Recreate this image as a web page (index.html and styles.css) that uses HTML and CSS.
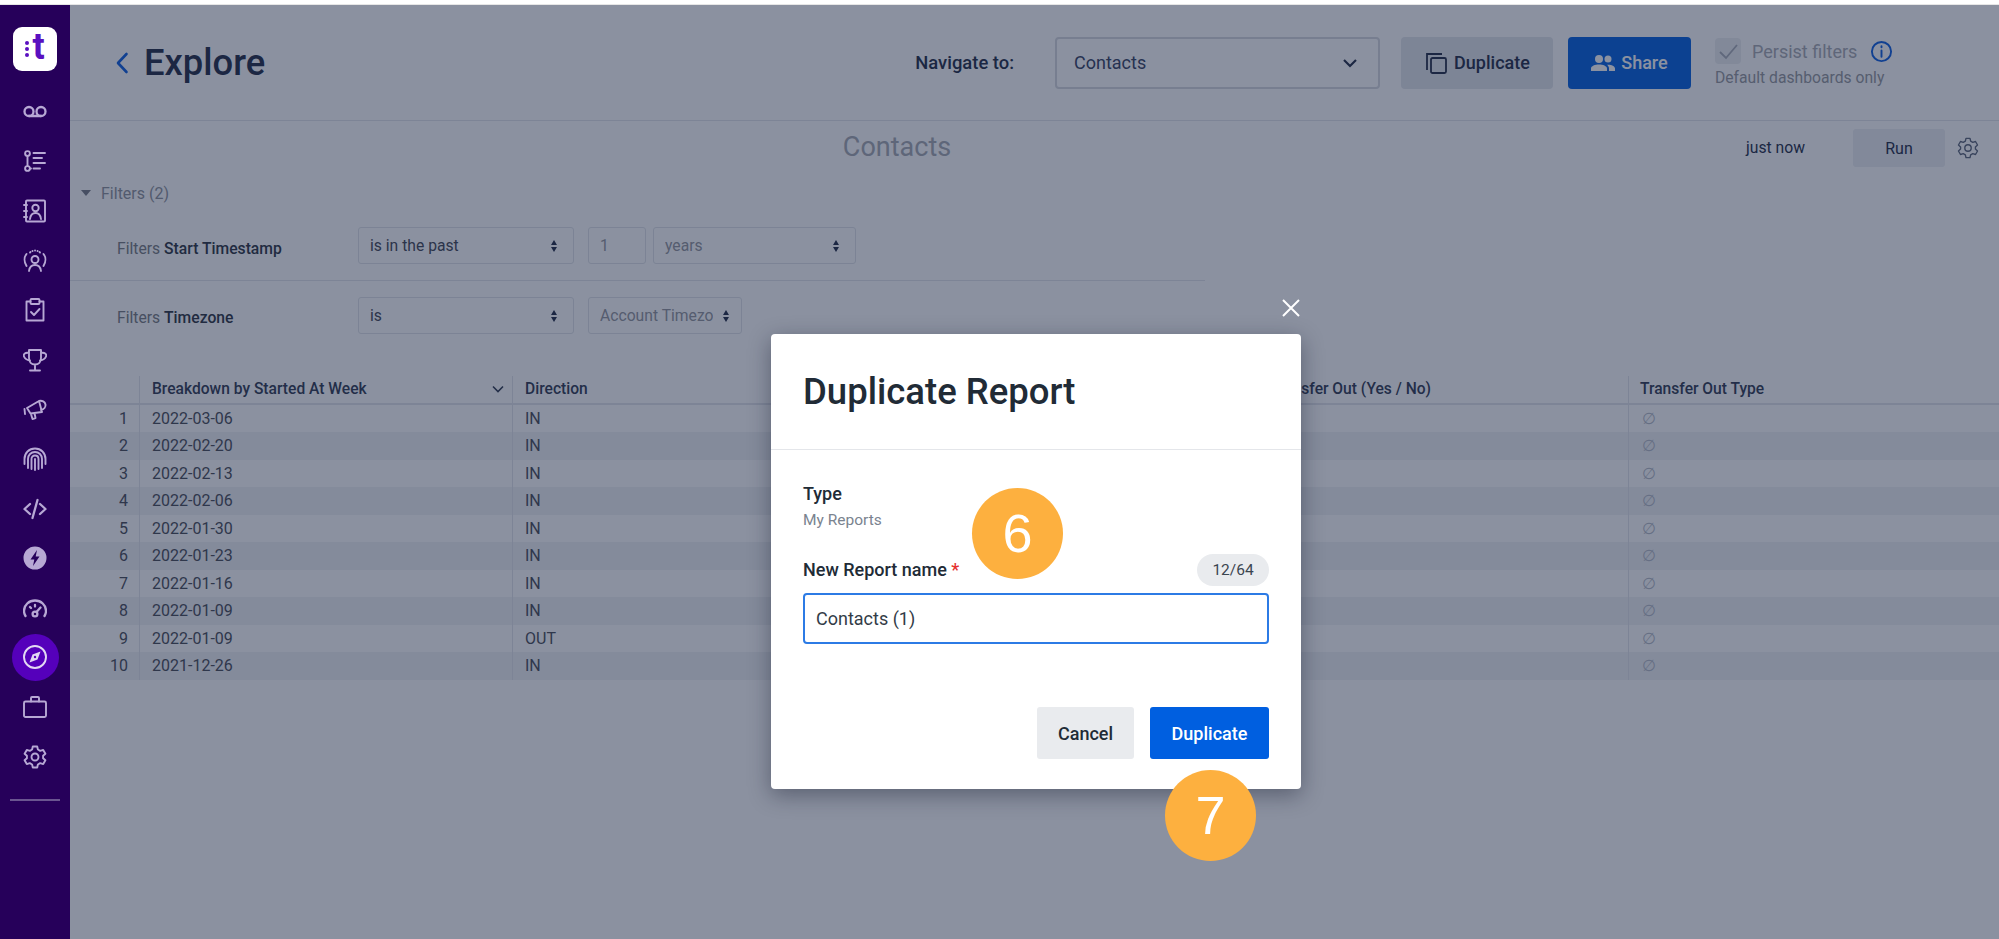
FILE: index.html
```html
<!DOCTYPE html>
<html lang="en">
<head>
<meta charset="utf-8">
<title>Explore</title>
<link rel="stylesheet" href="styles.css">
</head>
<body>
<div class="topstrip"></div>
<div class="app">
  <aside class="sidebar">
    <div class="logo"><span class="logo-dots"><i></i><i></i><i></i></span><span class="logo-t">t</span></div>
    <nav class="nav">
      <a class="nav-item"><svg viewBox="0 0 24 24" class="ic ic-bold"><circle cx="6" cy="11.500" r="4.500"/><circle cx="18" cy="11.500" r="4.500"/><path d="M6 16h12"/></svg></a>
      <a class="nav-item"><svg viewBox="0 0 24 24" class="ic"><circle cx="4.500" cy="4.500" r="2.400"/><circle cx="4.500" cy="19.500" r="2.400"/><path d="M4.500 7v10M7 19.500h1M10.500 4H22M10.500 9H19M10.500 14H22M10.500 19.500H17"/></svg></a>
      <a class="nav-item"><svg viewBox="0 0 24 24" class="ic"><rect x="3" y="1.500" width="19" height="21" rx="1"/><circle cx="12.500" cy="9" r="3.200"/><path d="M7 20c.5-4 2.500-6 5.500-6s5 2 5.500 6M1 6h3M1 12h3M1 18h3"/></svg></a>
      <a class="nav-item"><svg viewBox="0 0 24 24" class="ic"><circle cx="12" cy="10.500" r="3.500"/><path d="M6 22c.5-4 2.500-6 6-6s5.500 2 6 6M3.500 17C1 13 1 8 3.500 5M20.500 17c2.500-4 2.500-9 0-12"/><path class="dots" d="M7 3.500 7.500 3M12 1.500h.1M17 3.500 16.500 3M9.500 2h.1M14.500 2h.1"/></svg></a>
      <a class="nav-item"><svg viewBox="0 0 24 24" class="ic"><path d="M7.500 3.500H3.500v19h17v-19h-4"/><rect x="7.500" y="1" width="9" height="5" rx="1"/><path d="m8 14 3 3 5.500-6"/></svg></a>
      <a class="nav-item"><svg viewBox="0 0 24 24" class="ic"><path d="M6 2h12v8c0 4-2.500 6.500-6 6.500S6 14 6 10zM12 16.500V22M7 22.500h10M6 5C2.500 4 0 6 1 8.500S4 12 7 12.500M18 5c3.500-1 6 1 5 3.500S20 12 17 12.500"/></svg></a>
      <a class="nav-item"><svg viewBox="0 0 24 24" class="ic"><path d="m4 11 12-7 3 11-11.500 1.500zM16 4c3-1 6 1 6.500 3.500S21 12.500 18 13M1.500 12l.5 5M8 17l1.500 5 3-1-1-5"/></svg></a>
      <a class="nav-item"><svg viewBox="0 0 24 24" class="ic"><path d="M1.500 17v-5C1.500 6 6 1.500 12 1.500S22.500 6 22.500 12v5M5 21v-9c0-4 3-7 7-7s7 3 7 7v9M8.500 22v-10c0-2 1.500-3.500 3.500-3.500s3.500 1.500 3.500 3.500v10M12 12v11"/></svg></a>
      <a class="nav-item"><svg viewBox="0 0 24 24" class="ic ic-bold"><path d="M7 7 1.500 12 7 17M17 7l5.500 5-5.500 5M14.500 3 9.500 21"/></svg></a>
      <a class="nav-item"><svg viewBox="0 0 24 24" class="ic-fill"><path d="M12 .5a11.500 11.500 0 1 0 0 23 11.500 11.500 0 0 0 0-23zm-2 19.500 1.300-6.500H7.500L14 4l-1.300 6.500h3.800z"/></svg></a>
      <a class="nav-item"><svg viewBox="0 0 24 24" class="ic ic-bold"><path d="M2.500 20C1.500 18.500 1 16.500 1 15 1 9 6 4.500 12 4.500S23 9 23 15c0 1.500-.5 3.500-1.500 5M7 11l1 1M12 9v1.500M17.500 11.500 13.500 16"/><circle cx="12" cy="18" r="2.400"/></svg></a>
      <a class="nav-item is-active"><svg viewBox="0 0 24 24" class="ic ic-white"><circle cx="12" cy="12" r="11"/><path class="needle" d="M17.500 6.500 14.500 14.500 6.500 17.500 9.500 9.500z"/><circle class="hub" cx="12" cy="12" r="1.200"/></svg></a>
      <a class="nav-item"><svg viewBox="0 0 24 24" class="ic"><rect x="1" y="6.500" width="22" height="15.500" rx="1.500"/><path d="M8 6.500V3a1 1 0 0 1 1-1h6a1 1 0 0 1 1 1v3.500"/></svg></a>
      <a class="nav-item"><svg viewBox="0 0 24 24" class="ic"><circle cx="12" cy="12" r="3.500"/><path d="M9.800 1.500h4.400l.7 3 2.300 1.300 3-.9 2.200 3.800-2.300 2.100v2.400l2.300 2.100-2.200 3.800-3-.9-2.300 1.300-.7 3H9.800l-.7-3-2.300-1.300-3 .9-2.200-3.800 2.300-2.100v-2.400L1.600 8.700l2.200-3.800 3 .9 2.300-1.300z"/></svg></a>
    </nav>
    <div class="nav-rule"></div>
  </aside>

  <main class="main">
    <header class="page-head">
      <svg viewBox="0 0 14 22" class="back"><path d="M11.500 2 3 11l8.500 9"/></svg>
      <h1 class="page-title">Explore</h1>
      <span class="nav-label">Navigate to:</span>
      <div class="nav-select"><span>Contacts</span><svg viewBox="0 0 16 10" class="chev"><path d="m2 2 6 6 6-6"/></svg></div>
      <button class="btn btn-grey"><svg viewBox="0 0 24 24" class="btn-ic"><path d="M3 19V3h15"/><rect x="7" y="7" width="15" height="15" rx="1.500"/></svg>Duplicate</button>
      <button class="btn btn-blue"><svg viewBox="0 0 24 24" class="btn-ic-fill"><circle cx="8" cy="8" r="4"/><circle cx="17" cy="8" r="3.500"/><path d="M0 20v-2.500C0 15 4 13.500 8 13.500s8 1.500 8 4V20zM18 20v-2.500c0-1.500-.8-2.800-2-3.700 3.500-.4 8 1 8 3.700V20z"/></svg>Share</button>
      <div class="persist">
        <div class="persist-top">
          <span class="check"><svg viewBox="0 0 26 26"><path d="m5 14 6 6 11-13"/></svg></span>
          <span class="persist-label">Persist filters</span>
          <svg viewBox="0 0 24 24" class="info"><circle cx="12" cy="12" r="10"/><path d="M12 11v6.500M12 6.500v1"/></svg>
        </div>
        <div class="persist-note">Default dashboards only</div>
      </div>
    </header>

    <section class="report-bar">
      <h2 class="report-title">Contacts</h2>
      <div class="report-actions">
        <span class="stamp">just now</span>
        <button class="btn-run">Run</button>
        <svg viewBox="0 0 24 24" class="run-gear"><circle cx="12" cy="12" r="3.500"/><path d="M9.800 1.500h4.400l.7 3 2.300 1.300 3-.9 2.200 3.800-2.300 2.100v2.400l2.300 2.100-2.200 3.800-3-.9-2.300 1.300-.7 3H9.800l-.7-3-2.300-1.300-3 .9-2.200-3.800 2.300-2.100v-2.400L1.600 8.700l2.200-3.800 3 .9 2.300-1.300z"/></svg>
      </div>
    </section>

    <div class="filters-head"><span class="tri"></span>Filters (2)</div>
    <div class="filter-row first">
      <span class="filter-label">Filters <b>Start Timestamp</b></span>
      <div class="fsel w-op"><span class="fsel-text">is in the past</span><span class="updown"></span></div>
      <div class="fsel w-num"><span class="fsel-text muted">1</span></div>
      <div class="fsel w-unit"><span class="fsel-text muted">years</span><span class="updown"></span></div>
    </div>
    <div class="filter-row second">
      <span class="filter-label">Filters <b>Timezone</b></span>
      <div class="fsel w-op"><span class="fsel-text">is</span><span class="updown"></span></div>
      <div class="fsel w-tz"><span class="fsel-text muted">Account Timezone</span><span class="updown"></span></div>
    </div>

    <div class="table">
      <div class="tr th">
        <div class="td c-num"></div>
        <div class="td c-a">Breakdown by Started At Week<svg viewBox="0 0 12 8" class="th-chev"><path d="m1 1.500 5 5 5-5"/></svg></div>
        <div class="td c-b">Direction</div>
        <div class="td c-c">Transfer Out (Yes / No)</div>
        <div class="td c-d">Transfer Out Type</div>
      </div>
      <div class="tr"><div class="td c-num">1</div><div class="td c-a">2022-03-06</div><div class="td c-b">IN</div><div class="td c-c"></div><div class="td c-d null">∅</div></div>
      <div class="tr"><div class="td c-num">2</div><div class="td c-a">2022-02-20</div><div class="td c-b">IN</div><div class="td c-c"></div><div class="td c-d null">∅</div></div>
      <div class="tr"><div class="td c-num">3</div><div class="td c-a">2022-02-13</div><div class="td c-b">IN</div><div class="td c-c"></div><div class="td c-d null">∅</div></div>
      <div class="tr"><div class="td c-num">4</div><div class="td c-a">2022-02-06</div><div class="td c-b">IN</div><div class="td c-c"></div><div class="td c-d null">∅</div></div>
      <div class="tr"><div class="td c-num">5</div><div class="td c-a">2022-01-30</div><div class="td c-b">IN</div><div class="td c-c"></div><div class="td c-d null">∅</div></div>
      <div class="tr"><div class="td c-num">6</div><div class="td c-a">2022-01-23</div><div class="td c-b">IN</div><div class="td c-c"></div><div class="td c-d null">∅</div></div>
      <div class="tr"><div class="td c-num">7</div><div class="td c-a">2022-01-16</div><div class="td c-b">IN</div><div class="td c-c"></div><div class="td c-d null">∅</div></div>
      <div class="tr"><div class="td c-num">8</div><div class="td c-a">2022-01-09</div><div class="td c-b">IN</div><div class="td c-c"></div><div class="td c-d null">∅</div></div>
      <div class="tr"><div class="td c-num">9</div><div class="td c-a">2022-01-09</div><div class="td c-b">OUT</div><div class="td c-c"></div><div class="td c-d null">∅</div></div>
      <div class="tr"><div class="td c-num">10</div><div class="td c-a">2021-12-26</div><div class="td c-b">IN</div><div class="td c-c"></div><div class="td c-d null">∅</div></div>
    </div>

    <div class="overlay">
      <div class="modal">
        <svg viewBox="0 0 20 20" class="modal-x"><path d="m2 2 16 16M18 2 2 18"/></svg>
        <div class="modal-head"><h3 class="modal-title">Duplicate Report</h3></div>
        <div class="modal-body">
          <div class="field-label">Type</div>
          <div class="field-value">My Reports</div>
          <div class="name-row">
            <span class="field-label">New Report name <em>*</em></span>
            <span class="counter">12/64</span>
          </div>
          <div class="name-input">Contacts (1)</div>
        </div>
        <div class="modal-foot">
          <button class="m-btn m-cancel">Cancel</button>
          <button class="m-btn m-ok">Duplicate</button>
        </div>
        <div class="step step-6">6</div>
        <div class="step step-7">7</div>
      </div>
    </div>
  </main>
</div>
</body>
</html>
```

FILE: styles.css
```css
* { box-sizing: border-box; }
html, body { margin: 0; height: 939px; overflow: hidden; background: #fff; }
body { font-family: Roboto, "Liberation Sans", sans-serif; color: #212b36; }
h1, h2, h3 { margin: 0; }
button { font-family: inherit; border: 0; padding: 0; }

.topstrip { height: 5px; background: #fff; border-bottom: 1px solid #e6e6e6; }
.app { display: flex; height: 934px; }

/* Sidebar */
.sidebar { width: 70px; flex: none; background: #26005a; display: flex; flex-direction: column; align-items: center; padding-top: 22px; }
.logo { width: 44px; height: 44px; border-radius: 9px; background: #fff; display: flex; align-items: center; justify-content: center; gap: 3px; color: #5a10c0; }
.logo-dots { display: flex; flex-direction: column; gap: 2px; }
.logo-dots i { display: block; width: 4px; height: 4px; border-radius: 50%; background: #5a10c0; }
.logo-t { font-size: 36px; font-weight: 700; line-height: 36px; margin-top: -5px; }
.nav { display: flex; flex-direction: column; align-items: center; margin-top: 16px; }
.nav-item { width: 47px; height: 49.600px; display: flex; align-items: center; justify-content: center; color: #b7a8d4; }
.nav-item.is-active { height: 47px; margin: 1.300px 0; border-radius: 50%; background: #5500bb; color: #e3d8f3; }
.ic { width: 24px; height: 24px; fill: none; stroke: currentColor; stroke-width: 1.900; stroke-linecap: round; stroke-linejoin: round; }
.ic-bold { stroke-width: 2.300; }
.ic-fill { width: 24px; height: 24px; fill: currentColor; fill-rule: evenodd; }
.dots { stroke-width: 1.800; }
.needle { fill: currentColor; stroke: none; }
.hub { fill: #5500bb; stroke: none; }
.nav-rule { width: 50px; height: 2px; margin-top: 18px; background: #6a5590; }

/* Main */
.main { flex: 1; min-width: 0; position: relative; background: #fff; }
.page-head { height: 116px; display: flex; align-items: center; border-bottom: 1px solid #e3e5ea; padding: 0 104px 0 45px; }
.back { width: 14px; height: 22px; fill: none; stroke: #0a5de0; stroke-width: 2.600; stroke-linecap: round; stroke-linejoin: round; }
.page-title { font-size: 36.400px; font-weight: 500; line-height: 44px; color: #212b45; margin-left: 15px; margin-right: auto; }
.nav-label { font-size: 18.400px; font-weight: 500; color: #212b45; margin-right: 41px; }
.nav-select { width: 325px; height: 52px; border: 2px solid #d6d9de; border-radius: 4px; display: flex; align-items: center; justify-content: space-between; padding: 0 20px 0 17px; font-size: 18px; color: #344060; margin-right: 21px; }
.chev { width: 16px; height: 10px; fill: none; stroke: #212b45; stroke-width: 2.200; }
.btn { height: 52px; border-radius: 4px; display: flex; align-items: center; justify-content: center; gap: 6px; font-size: 18px; font-weight: 500; }
.btn-grey { width: 152px; background: #e3e6eb; color: #212b45; margin-right: 15px; }
.btn-blue { width: 123px; background: #005fe0; color: #fff; margin-right: 24px; }
.btn-ic { width: 24px; height: 24px; fill: none; stroke: #212b45; stroke-width: 1.800; }
.btn-ic-fill { width: 24px; height: 24px; fill: #fff; }
.persist { width: 180px; }
.persist-top { display: flex; align-items: center; height: 26px; }
.check { width: 26px; height: 26px; border-radius: 4px; background: #eceef1; display: block; }
.check svg { width: 26px; height: 26px; fill: none; stroke: #a8adb6; stroke-width: 1.800; display: block; }
.persist-label { font-size: 18px; color: #a6a9b0; margin-left: 11px; white-space: nowrap; }
.info { width: 23px; height: 23px; flex: none; fill: none; stroke: #0a5de0; stroke-width: 2; stroke-linecap: round; margin-left: 13px; }
.persist-note { font-size: 15.700px; color: #94979c; margin-top: 4px; white-space: nowrap; }

.report-bar { height: 60px; display: flex; }
.report-title { flex: 1; text-align: center; font-size: 27px; font-weight: 400; color: #a4a8b0; line-height: 52px; }
.report-actions { width: 275px; flex: none; display: flex; align-items: flex-start; padding-top: 8px; padding-left: 22px; }
.stamp { font-size: 15.700px; line-height: 38px; color: #212b45; width: 107px; }
.btn-run { width: 92px; height: 38px; border-radius: 3px; background: #eceef2; font-size: 16px; color: #212b45; }
.run-gear { width: 22px; height: 22px; fill: none; stroke: #5a6478; stroke-width: 1.500; stroke-linejoin: round; margin: 8px 0 0 12px; }

.filters-head { height: 24px; padding-left: 11px; display: flex; align-items: center; font-size: 16px; color: #8d919a; }
.tri { width: 0; height: 0; border-left: 5px solid transparent; border-right: 5px solid transparent; border-top: 6px solid #767a84; margin-right: 10px; }

.filter-row { width: 1135px; display: flex; align-items: center; padding: 16px 0 0 47px; }
.filter-row.first { padding: 22px 0 16px 47px; border-bottom: 1px solid #e3e5ea; }
.filter-label { width: 241px; font-size: 15.700px; color: #767a80; padding-top: 5px; }
.filter-row.second .filter-label { padding-top: 3px; }
.filter-label b { font-weight: 500; color: #2b3240; }
.fsel { height: 37px; border: 1px solid #e0e3e8; border-radius: 3px; display: flex; align-items: center; padding: 0 14px 0 11px; margin-right: 14px; font-size: 15.700px; color: #3f4552; overflow: hidden; }
.fsel-text { flex: 1; white-space: nowrap; overflow: hidden; }
.muted { color: #92959c; }
.w-op { width: 216px; }
.w-num { width: 58px; margin-right: 7px; }
.w-unit { width: 203px; }
.w-tz { width: 154px; padding-right: 10px; }
.updown { flex: none; width: 8px; height: 12px; margin-left: 10px; position: relative; }
.updown::before, .updown::after { content: ""; position: absolute; left: 0; border-left: 3.500px solid transparent; border-right: 3.500px solid transparent; }
.updown::before { top: 0; border-bottom: 5px solid #212b45; }
.updown::after { bottom: 0; border-top: 5px solid #212b45; }

.table { margin-top: 42px; }
.tr { display: flex; height: 27.500px; font-size: 16px; color: #474b55; }
.tr:nth-child(odd) { background: #f1f2f5; }
.tr.th { background: none; height: 28.500px; border-bottom: 2px solid #e3e5ea; color: #2f3950; font-weight: 500; font-size: 15.600px; }
.td { display: flex; align-items: center; flex: none; white-space: nowrap; }
.c-num { width: 70px; justify-content: flex-end; padding-right: 11px; border-right: 1px solid #e3e5ea; }
.c-a { width: 373px; padding-left: 12px; border-right: 1px solid #e3e5ea; justify-content: space-between; padding-right: 8px; }
.c-b { width: 745px; padding-left: 12px; }
.c-c { width: 371px; padding-left: 12px; border-right: 1px solid #e3e5ea; }
.c-d { flex: 1; padding-left: 11px; }
.th-chev { width: 12px; height: 8px; fill: none; stroke: #2f3950; stroke-width: 1.600; }
.null { color: #b4bac6; padding-left: 13px; }

/* Overlay and dialog */
.overlay { position: absolute; inset: 0; background: rgba(23, 35, 65, .5); display: flex; justify-content: center; padding: 329px 0 0 3px; }
.modal { position: relative; width: 530px; height: 455px; background: #fff; border-radius: 4px; box-shadow: 0 6px 22px rgba(15, 20, 40, .4); display: flex; flex-direction: column; }
.modal-x { position: absolute; left: 510px; top: -36px; width: 20px; height: 20px; fill: none; stroke: #fff; stroke-width: 2; }
.modal-head { height: 116px; padding: 0 32px; display: flex; align-items: center; border-bottom: 1px solid #e4e6ea; }
.modal-title { font-size: 36.500px; font-weight: 500; color: #212b36; }
.modal-body { padding: 32px 32px 0; }
.field-label { font-size: 18px; font-weight: 500; line-height: 24px; color: #212b36; white-space: nowrap; }
.field-label em { font-style: normal; color: #e5312f; }
.field-value { font-size: 15.500px; line-height: 20px; color: #7a838f; margin-top: 4px; }
.name-row { display: flex; align-items: center; justify-content: space-between; height: 32px; margin-top: 24px; }
.counter { width: 72px; height: 32px; border-radius: 16px; background: #e9ebee; font-size: 15.500px; line-height: 32px; text-align: center; color: #3b4550; }
.name-input { height: 51px; margin-top: 7px; border: 2px solid #2c7be5; border-radius: 4px; font-size: 18px; line-height: 47px; padding-left: 11px; color: #333c47; }
.modal-foot { display: flex; justify-content: flex-end; gap: 16px; padding: 63px 32px 0; }
.m-btn { height: 52px; border-radius: 3px; font-size: 18px; font-weight: 500; }
.m-cancel { width: 97px; background: #e9ebee; color: #212b36; }
.m-ok { width: 119px; background: #005fe0; color: #fff; }
.step { position: absolute; width: 91px; height: 91px; border-radius: 50%; background: #fdb03f; color: #fff; font-family: "Liberation Sans", sans-serif; font-size: 54px; line-height: 91px; text-align: center; }
.step-6 { left: 201px; top: 154px; }
.step-7 { left: 394px; top: 436px; }
```
